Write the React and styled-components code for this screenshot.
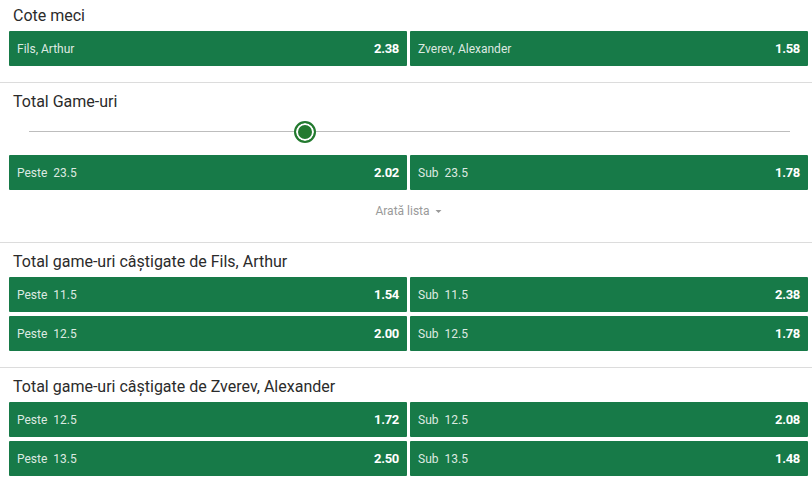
import React from "react"
import styled, { createGlobalStyle } from "styled-components"

const GlobalStyle = createGlobalStyle`
    body {
        margin: 0;
        background: #fff;
        font-family: Roboto, "Liberation Sans", Arial, sans-serif;
    }
`

const markets = [
    {
        title: "Cote meci",
        rows: [[{ label: "Fils, Arthur", odds: "2.38" }, { label: "Zverev, Alexander", odds: "1.58" }]],
    },
    {
        title: "Total Game-uri",
        slider: 0.3627,
        showMore: true,
        rows: [[{ label: "Peste", line: "23.5", odds: "2.02" }, { label: "Sub", line: "23.5", odds: "1.78" }]],
    },
    {
        title: "Total game-uri câștigate de Fils, Arthur",
        rows: [
            [{ label: "Peste", line: "11.5", odds: "1.54" }, { label: "Sub", line: "11.5", odds: "2.38" }],
            [{ label: "Peste", line: "12.5", odds: "2.00" }, { label: "Sub", line: "12.5", odds: "1.78" }],
        ],
    },
    {
        title: "Total game-uri câștigate de Zverev, Alexander",
        rows: [
            [{ label: "Peste", line: "12.5", odds: "1.72" }, { label: "Sub", line: "12.5", odds: "2.08" }],
            [{ label: "Peste", line: "13.5", odds: "2.50" }, { label: "Sub", line: "13.5", odds: "1.48" }],
        ],
    },
]

const App = () => {
    return (
        <>
            <GlobalStyle />
            <Page>
                {markets.map((m) => (
                    <Section key={m.title}>
                        <Title>{m.title}</Title>
                        {m.slider !== undefined && (
                            <Slider>
                                <Track>
                                    <Thumb style={{ left: `${m.slider * 100}%` }} />
                                </Track>
                            </Slider>
                        )}
                        <Grid>
                            {m.rows.flat().map((o, i) => (
                                <Odd key={i}>
                                    <Label>
                                        {o.label}
                                        {o.line && <Line>{o.line}</Line>}
                                    </Label>
                                    <Price>{o.odds}</Price>
                                </Odd>
                            ))}
                        </Grid>
                        {m.showMore && (
                            <ShowMore>
                                Arată lista
                                <svg width="7" height="5" viewBox="0 0 7 5">
                                    <path d="M0.5 1 L3.5 4 L6.5 1 Z" fill="#9a9a9a" />
                                </svg>
                            </ShowMore>
                        )}
                    </Section>
                ))}
            </Page>
        </>
    )
}

export default App

const Page = styled.div`
    width: 812px;
    display: flex;
    flex-direction: column;
`

const Section = styled.div`
    padding: 7px 4px 16px 9px;
    border-top: 1px solid #dcdcdc;

    &:first-child {
        padding-top: 4px;
        border-top: none;
    }
`

const Title = styled.div`
    font-size: 16px;
    line-height: 24px;
    color: #2b2b2b;
    padding-left: 4px;
    margin-bottom: 3px;
`

const Slider = styled.div`
    padding: 4px 18px 12px 20px;
`

const Track = styled.div`
    position: relative;
    height: 22px;

    &::before {
        content: "";
        position: absolute;
        left: 0;
        right: 0;
        top: 10px;
        height: 1px;
        background: #bdbdbd;
    }
`

const Thumb = styled.div`
    position: absolute;
    top: 0;
    width: 22px;
    height: 22px;
    margin-left: -11px;
    box-sizing: border-box;
    border-radius: 50%;
    background: #237a2f;
    border: 2px solid #237a2f;
    box-shadow: inset 0 0 0 2px #fff;
`

const Grid = styled.div`
    display: grid;
    grid-template-columns: 1fr 1fr;
    column-gap: 3px;
    row-gap: 4px;
`

const Odd = styled.div`
    height: 35px;
    background: #177a48;
    display: flex;
    align-items: center;
    justify-content: space-between;
    padding: 0 8px 0 8px;
    border-radius: 1px;
    cursor: pointer;
`

const Label = styled.span`
    font-size: 12px;
    color: rgba(255, 255, 255, 0.86);
    display: flex;
    gap: 6px;
`

const Line = styled.span``

const Price = styled.span`
    font-size: 13px;
    font-weight: 700;
    color: #fff;
    letter-spacing: -0.3px;
`

const ShowMore = styled.div`
    display: flex;
    justify-content: center;
    align-items: center;
    gap: 5px;
    padding: 13px 0 7px;
    line-height: 16px;
    font-size: 12px;
    color: #9a9a9a;
`
